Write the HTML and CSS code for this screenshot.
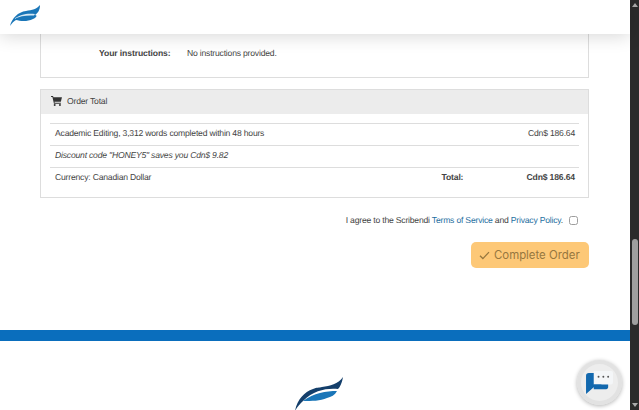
FILE: index.html
```html
<!DOCTYPE html>
<html lang="en">
<head>
    <meta charset="UTF-8">
    <title>Complete Order</title>
    <link rel="stylesheet" href="styles.css">
</head>
<body>

<div class="page">
    <header class="topbar">
        <svg class="logo-small" viewBox="0 0 32 22" width="32" height="22">
            <path d="M1 21C3 13 9 7 17 6C23 5 28 4 31 0C31 5 29 8 26 10C29 10 27 13 24 14C18 17 11 16 7 15C5 16 3 18 1 21Z" fill="#1a76b8"/>
            <path d="M5 14C11 9 19 8 26 9L25 10.500C18 10 11 11 5 14Z" fill="#d5e8f4"/>
        </svg>
    </header>

    <main class="content">
        <section class="panel panel-top">
            <div class="instructions">
                <span class="instructions-label">Your instructions:</span>
                <span>No instructions provided.</span>
            </div>
        </section>

        <section class="panel panel-total">
            <div class="panel-head">
                <svg class="cart" viewBox="0 0 12 11" width="11" height="10">
                    <path d="M0 0H2.2L2.6 1.500H12L10.800 6.400H3.800L4 7.400H10.800V8.400H3.200L1.500 1H0Z" fill="#333"/>
                    <circle cx="4" cy="9.800" r="1.100" fill="#333"/>
                    <circle cx="9.800" cy="9.800" r="1.100" fill="#333"/>
                </svg>
                Order Total
            </div>
            <div class="rows">
                <div class="row">
                    <span>Academic Editing, 3,312 words completed within 48 hours</span>
                    <span>Cdn$ 186.64</span>
                </div>
                <div class="row row-discount">
                    <span>Discount code "HONEY5" saves you Cdn$ 9.82</span>
                </div>
                <div class="row row-last">
                    <span class="currency">Currency: Canadian Dollar</span>
                    <b class="total-label">Total:</b>
                    <b>Cdn$ 186.64</b>
                </div>
            </div>
        </section>

        <div class="agree">
            <span>I agree to the Scribendi <a href="#">Terms of Service</a> and <a href="#">Privacy Policy</a>.</span>
            <input type="checkbox" class="agree-box">
        </div>

        <div class="actions">
            <button class="btn-complete" type="button">
                <svg viewBox="0 0 12 10" width="11" height="9">
                    <path d="M1 5.200L4.200 8.400L11 1.200" fill="none" stroke="#96773f" stroke-width="1.400"/>
                </svg>
                Complete Order
            </button>
        </div>
    </main>

    <footer class="footer">
        <svg class="logo-big" viewBox="0 0 50 34" width="50" height="34">
            <path d="M1 34C3 23 10 15 19 12C23 10 25 11 28 10C36 9 44 7 49 0C48 6 46 10 44 12C33 11 20 13 9 24C6 27 3 30 1 34Z" fill="#143f6b"/>
            <path d="M9 24C20 16 32 14 43 14C41 18 37 20 33 21C26 24 18 24 9 24Z" fill="#1a76b8"/>
        </svg>
    </footer>
</div>

<div class="scrollbar">
    <span class="arrow-up"></span>
    <span class="thumb"></span>
    <span class="arrow-down"></span>
</div>

<div class="chat">
    <svg viewBox="0 0 30 26" width="29" height="25">
        <path d="M1 6C1 4 2 3 4 3H17V18H9L1 25Z" fill="#1268ae"/>
        <path d="M9 1H27C28.500 1 29 2 29 3V13C29 14 28.500 15 27 15H9Z" fill="#f4f6f8"/>
        <path d="M9 15H24V18C24 19 23 20 22 20H9Z" fill="#1268ae"/>
        <circle cx="14" cy="7" r="1" fill="#555"/>
        <circle cx="19" cy="7" r="1" fill="#555"/>
        <circle cx="24" cy="7" r="1" fill="#555"/>
    </svg>
</div>

</body>
</html>
```

FILE: styles.css
```css
html, body {
    margin: 0;
    height: 410px;
    overflow: hidden;
}

body {
    display: flex;
    background: #fff;
    color: #444;
    font-family: "Liberation Sans", Arial, sans-serif;
    font-size: 8.6px;
    letter-spacing: -0.2px;
    text-rendering: geometricPrecision;
}

b {
    letter-spacing: -0.15px;
}

.page {
    flex: 1;
    min-width: 0;
    display: flex;
    flex-direction: column;
}

.topbar {
    height: 34px;
    flex: none;
    box-sizing: border-box;
    padding: 5px 0 0 9px;
    background: #fff;
    box-shadow: 0 2px 18px rgba(0, 0, 0, 0.16);
    position: relative;
    z-index: 1;
}

.logo-small {
    display: block;
}

.content {
    padding: 0 41px 0 40px;
}

.panel {
    border: 1px solid #ddd;
    background: #fff;
}

.panel-top {
    height: 44px;
    box-sizing: border-box;
    border-top: 0;
}

.instructions {
    display: flex;
    padding-top: 14px;
    line-height: 11px;
}

.instructions-label {
    width: 146px;
    box-sizing: border-box;
    padding-left: 58px;
    font-weight: bold;
    letter-spacing: -0.1px;
}

.panel-total {
    margin-top: 11px;
    height: 109px;
    box-sizing: border-box;
}

.panel-head {
    height: 24px;
    box-sizing: border-box;
    display: flex;
    align-items: center;
    gap: 5px;
    padding: 0 0 2px 10px;
    background: #ececec;
}

.cart {
    margin-top: -1px;
}

.rows {
    margin: 9px 9px 0;
    border-top: 1px solid #ddd;
}

.row {
    height: 21px;
    display: flex;
    align-items: center;
    justify-content: space-between;
    padding: 0 4px 0 5px;
    border-bottom: 1px solid #ddd;
}

.row span, .row b {
    margin-top: -3px;
}

.row-discount {
    font-style: italic;
}

.row-last {
    border-bottom: 0;
}

.currency {
    flex: 1;
}

.total-label {
    width: 85px;
}

.agree {
    display: flex;
    justify-content: flex-end;
    align-items: center;
    gap: 6px;
    margin-top: 16px;
    height: 12px;
}

.agree a {
    color: #1f6f9f;
    text-decoration: none;
}

.agree-box {
    width: 9px;
    height: 9px;
    margin: 0 11px 0 0;
    opacity: 0.7;
}

.actions {
    display: flex;
    justify-content: flex-end;
    margin-top: 16px;
}

.btn-complete {
    width: 118px;
    height: 26px;
    display: flex;
    align-items: center;
    gap: 4px;
    padding: 0 0 0 8px;
    border: 0;
    border-radius: 5px;
    background: #fdc877;
    color: #96773f;
    font-family: Inter, "Open Sans", sans-serif;
    font-size: 11.4px;
}

.footer {
    margin-top: 62px;
    border-top: 11px solid #0a6ebd;
    display: flex;
    justify-content: center;
    padding-top: 36px;
}

.logo-big {
    display: block;
    margin-left: 7px;
    flex: none;
}

.scrollbar {
    width: 9px;
    flex: none;
    display: flex;
    flex-direction: column;
    align-items: center;
    background: #2b2b2b;
}

.arrow-up {
    margin-top: 3px;
    border: 3px solid transparent;
    border-top: 0;
    border-bottom: 4px solid #aaa;
}

.thumb {
    width: 6px;
    height: 86px;
    margin-top: 232px;
    border-radius: 3px;
    background: #9f9f9f;
}

.arrow-down {
    margin-top: auto;
    margin-bottom: 3px;
    border: 3px solid transparent;
    border-bottom: 0;
    border-top: 4px solid #aaa;
}

.chat {
    position: absolute;
    left: 577px;
    top: 360px;
    width: 45px;
    height: 45px;
    display: flex;
    align-items: center;
    justify-content: center;
    border-radius: 50%;
    background: #ededed;
    box-shadow: 0 1px 4px rgba(0, 0, 0, 0.3), inset 0 0 0 4px #e2e2e2;
}
```
